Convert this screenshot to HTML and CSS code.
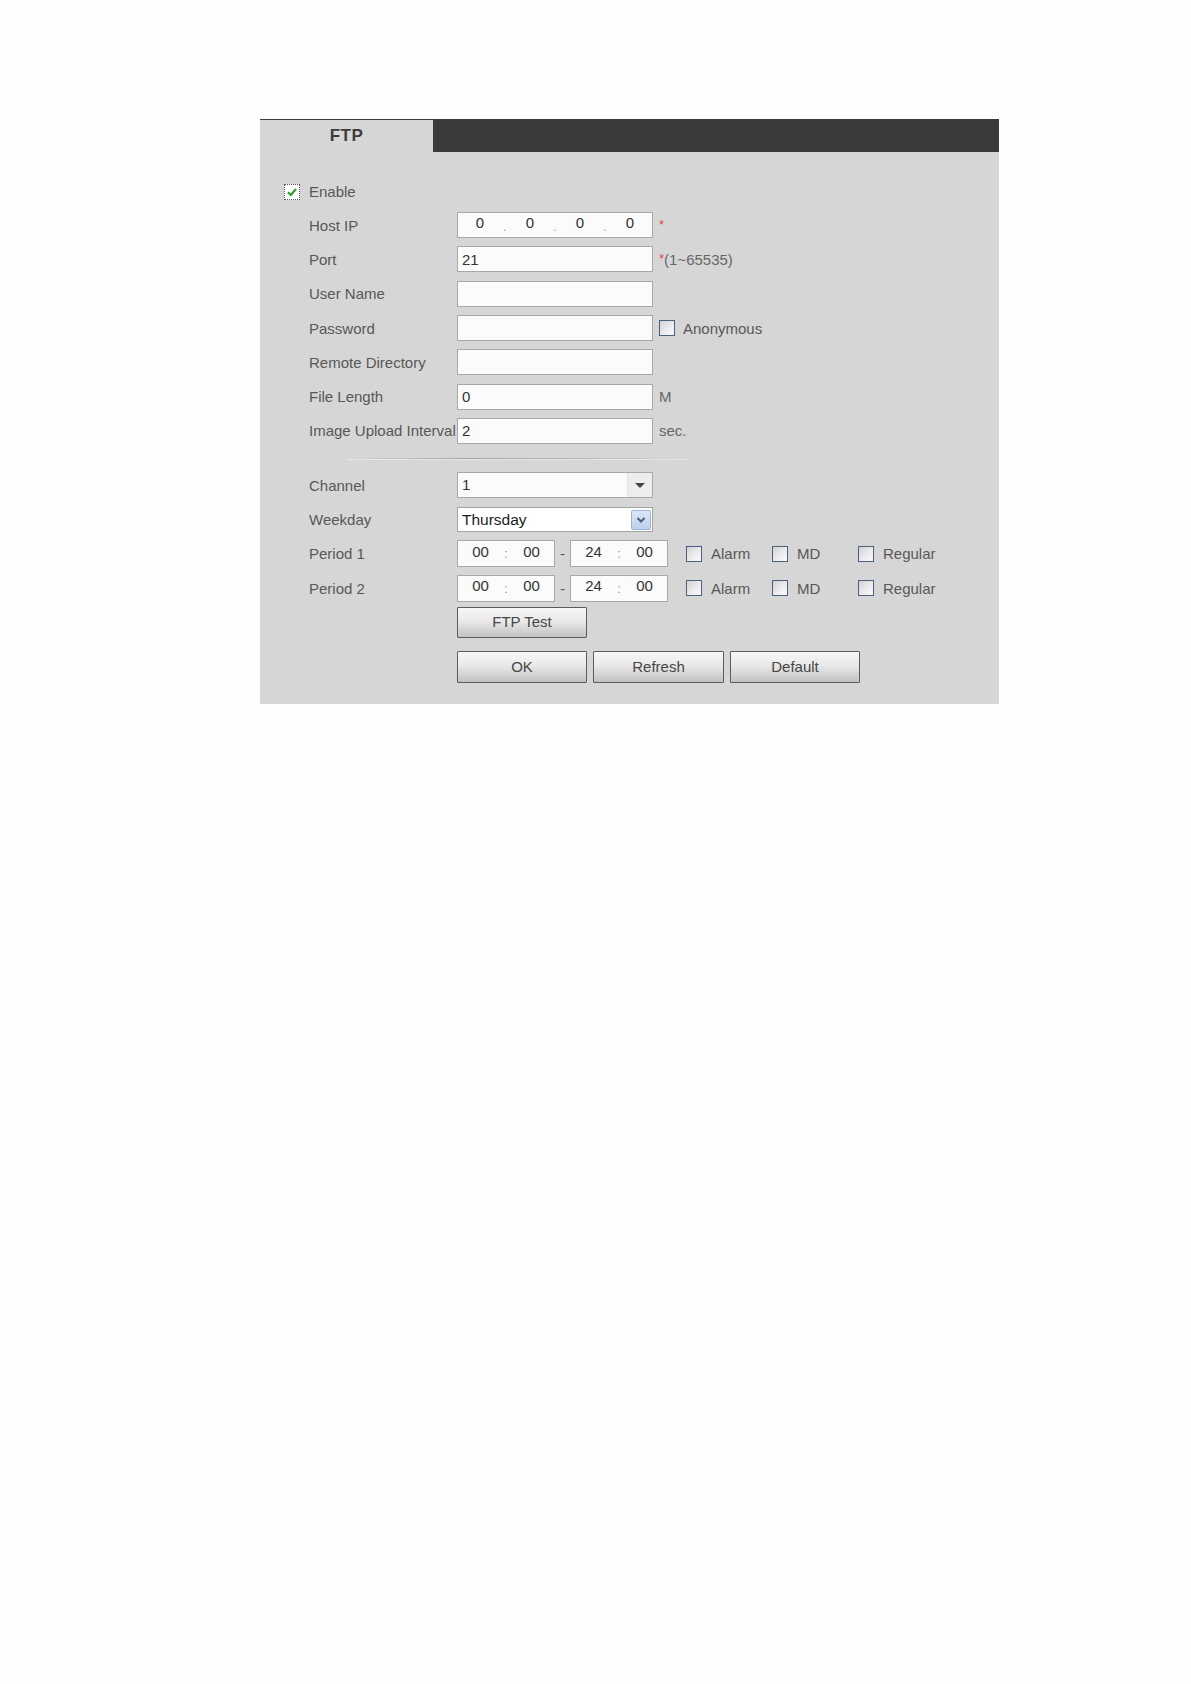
FILE: index.html
```html
<!DOCTYPE html>
<html>
<head>
<meta charset="utf-8">
<title>FTP</title>
<link rel="stylesheet" href="styles.css">
</head>
<body>
<div class="panel">
  <div class="tabs">
    <div class="tab">FTP</div>
    <div class="tabfill"></div>
  </div>
  <div class="content">
    <div class="row enable">
      <span class="cb checked"><svg width="12" height="12" viewBox="0 0 12 12"><path d="M2 6.2 L4.8 9 L10 3" fill="none" stroke="#2d9e2d" stroke-width="2.2"/></svg></span>
      <span>Enable</span>
    </div>
    <div class="row">
      <span class="lbl">Host IP</span>
      <div class="inp ip"><span class="seg">0</span><span class="dot">.</span><span class="seg">0</span><span class="dot">.</span><span class="seg">0</span><span class="dot">.</span><span class="seg">0</span></div>
      <span class="suffix"><span class="req">*</span></span>
    </div>
    <div class="row">
      <span class="lbl">Port</span>
      <div class="inp">21</div>
      <span class="suffix"><span class="req">*</span>(1~65535)</span>
    </div>
    <div class="row">
      <span class="lbl">User Name</span>
      <div class="inp"></div>
    </div>
    <div class="row">
      <span class="lbl">Password</span>
      <div class="inp"></div>
      <span class="cb anon"></span><span>Anonymous</span>
    </div>
    <div class="row">
      <span class="lbl">Remote Directory</span>
      <div class="inp"></div>
    </div>
    <div class="row">
      <span class="lbl">File Length</span>
      <div class="inp">0</div>
      <span class="suffix">M</span>
    </div>
    <div class="row">
      <span class="lbl">Image Upload Interval</span>
      <div class="inp">2</div>
      <span class="suffix">sec.</span>
    </div>
    <div class="sep"><div class="sepline"></div></div>
    <div class="row">
      <span class="lbl">Channel</span>
      <div class="inp sel">
        <span class="selval">1</span>
        <span class="selbtn"><span class="tri"></span></span>
      </div>
    </div>
    <div class="row">
      <span class="lbl">Weekday</span>
      <div class="inp combo">
        <span class="selval">Thursday</span>
        <span class="combobtn"><svg width="12" height="10" viewBox="0 0 12 10"><path d="M2.5 3 L6 6.5 L9.5 3" fill="none" stroke="#4d5f80" stroke-width="2"/></svg></span>
      </div>
    </div>
    <div class="row">
      <span class="lbl">Period 1</span>
      <div class="inp time"><span class="tseg">00</span><span class="colon">:</span><span class="tseg">00</span></div>
      <span class="dash">-</span>
      <div class="inp time"><span class="tseg">24</span><span class="colon">:</span><span class="tseg">00</span></div>
      <span class="opt first"><span class="cb"></span>Alarm</span>
      <span class="opt"><span class="cb"></span>MD</span>
      <span class="opt"><span class="cb"></span>Regular</span>
    </div>
    <div class="row">
      <span class="lbl">Period 2</span>
      <div class="inp time"><span class="tseg">00</span><span class="colon">:</span><span class="tseg">00</span></div>
      <span class="dash">-</span>
      <div class="inp time"><span class="tseg">24</span><span class="colon">:</span><span class="tseg">00</span></div>
      <span class="opt first"><span class="cb"></span>Alarm</span>
      <span class="opt"><span class="cb"></span>MD</span>
      <span class="opt"><span class="cb"></span>Regular</span>
    </div>
    <div class="btnrow test">
      <button class="btn">FTP Test</button>
    </div>
    <div class="btnrow actions">
      <button class="btn">OK</button>
      <button class="btn wide">Refresh</button>
      <button class="btn">Default</button>
    </div>
  </div>
</div>
</body>
</html>
```
FILE: styles.css
```css
body {
  margin: 0;
  background: #fefefe;
  font-family: "Liberation Sans", Arial, sans-serif;
}

.panel {
  margin: 119px 0 0 260px;
  width: 739px;
  background: #d6d6d6;
  padding-bottom: 21px;
}

.tabs {
  display: flex;
  height: 33px;
  border-top: 1px solid #3a3a3a;
  box-sizing: border-box;
}

.tab {
  width: 173px;
  display: flex;
  align-items: center;
  justify-content: center;
  font-weight: bold;
  font-size: 17px;
  color: #3c3c3c;
  letter-spacing: 0.5px;
}

.tabfill {
  flex: 1;
  background: #3a3a3a;
}

.content {
  padding: 23px 0 0 24px;
}

.row {
  display: flex;
  align-items: center;
  height: 34.3px;
  font-size: 15px;
  color: #585858;
  white-space: nowrap;
}

.row.enable {
  height: 33px;
}

.lbl {
  box-sizing: border-box;
  width: 173px;
  padding-left: 25px;
  flex: none;
}

.inp {
  box-sizing: border-box;
  width: 196px;
  height: 26px;
  border: 1px solid #a8a8a8;
  background: #fbfbfb;
  color: #333;
  padding-left: 4px;
  display: flex;
  align-items: center;
  flex: none;
}

.ip {
  padding-left: 0;
}

.seg {
  width: 44px;
  text-align: center;
  padding-bottom: 5px;
}

.dot {
  width: 6px;
  text-align: center;
  color: #999;
  font-size: 12px;
  padding-top: 4px;
}

.suffix {
  margin-left: 6px;
  color: #666;
}

.req {
  color: #e0474c;
  font-size: 13px;
  position: relative;
  top: -2px;
}

.cb {
  box-sizing: border-box;
  width: 16px;
  height: 16px;
  border: 1px solid #4a5f82;
  background: linear-gradient(135deg, #d2d2d2 0%, #ececec 55%, #fbfbfb 100%);
  display: inline-flex;
  align-items: center;
  justify-content: center;
  flex: none;
}

.cb.checked {
  border: 1px dotted #555;
  background: #fff;
  margin-right: 9px;
}

.cb.anon {
  margin-left: 6px;
  margin-right: 8px;
}

.sep {
  height: 20px;
  display: flex;
  align-items: center;
}

.sepline {
  margin-left: 63px;
  width: 340px;
  height: 1px;
  background: linear-gradient(to right, rgba(160,160,160,0) 0%, #a4a4a4 35%, #b4b4b4 65%, rgba(180,180,180,0) 100%);
  box-shadow: 0 1px 0 #e6e6e6;
}

.sel {
  padding-left: 4px;
  padding-right: 0;
}

.selval {
  flex: 1;
}

.sel .selval {
  padding-bottom: 2px;
}

.selbtn {
  width: 24px;
  height: 24px;
  background: #ededed;
  border-left: 1px solid #e2e2e2;
  display: flex;
  align-items: center;
  justify-content: center;
}

.tri {
  width: 0;
  height: 0;
  border-left: 5px solid transparent;
  border-right: 5px solid transparent;
  border-top: 5px solid #444;
}

.combo {
  background: #fff;
  border-color: #a4a4a4;
  height: 25px;
  padding-left: 4px;
  padding-right: 1px;
}

.combo .selval {
  color: #1c1c1c;
  font-size: 15.5px;
}

.combobtn {
  box-sizing: border-box;
  width: 20px;
  height: 20px;
  border: 1px solid #9fb3d6;
  border-radius: 2px;
  background: linear-gradient(#dde7f7, #bccfee);
  display: flex;
  align-items: center;
  justify-content: center;
}

.time {
  width: 98px;
  padding-left: 0;
  height: 27px;
}

.tseg {
  width: 45px;
  text-align: center;
  padding-bottom: 5px;
}

.colon {
  width: 6px;
  text-align: center;
  color: #999;
  font-size: 13px;
}

.dash {
  width: 15px;
  text-align: center;
  color: #555;
  flex: none;
}

.opt {
  display: flex;
  align-items: center;
  width: 86px;
  flex: none;
}

.opt.first {
  margin-left: 18px;
}

.opt .cb {
  margin-right: 9px;
}

.btnrow {
  display: flex;
  gap: 6px;
  padding-left: 173px;
}

.btnrow.test {
  margin-top: 2px;
}

.btnrow.actions {
  margin-top: 13px;
}

.btn {
  box-sizing: border-box;
  width: 130px;
  height: 32px;
  border: 1px solid #5c5c5c;
  border-radius: 1px;
  background: linear-gradient(#f7f7f7 0%, #e9e9e9 45%, #d0d0d0 80%, #c2c2c2 100%);
  color: #464646;
  font-family: "Liberation Sans", Arial, sans-serif;
  font-size: 15px;
  padding: 0;
  padding-bottom: 2px;
}

.test .btn {
  height: 31px;
}

.btn.wide {
  width: 131px;
}
```
